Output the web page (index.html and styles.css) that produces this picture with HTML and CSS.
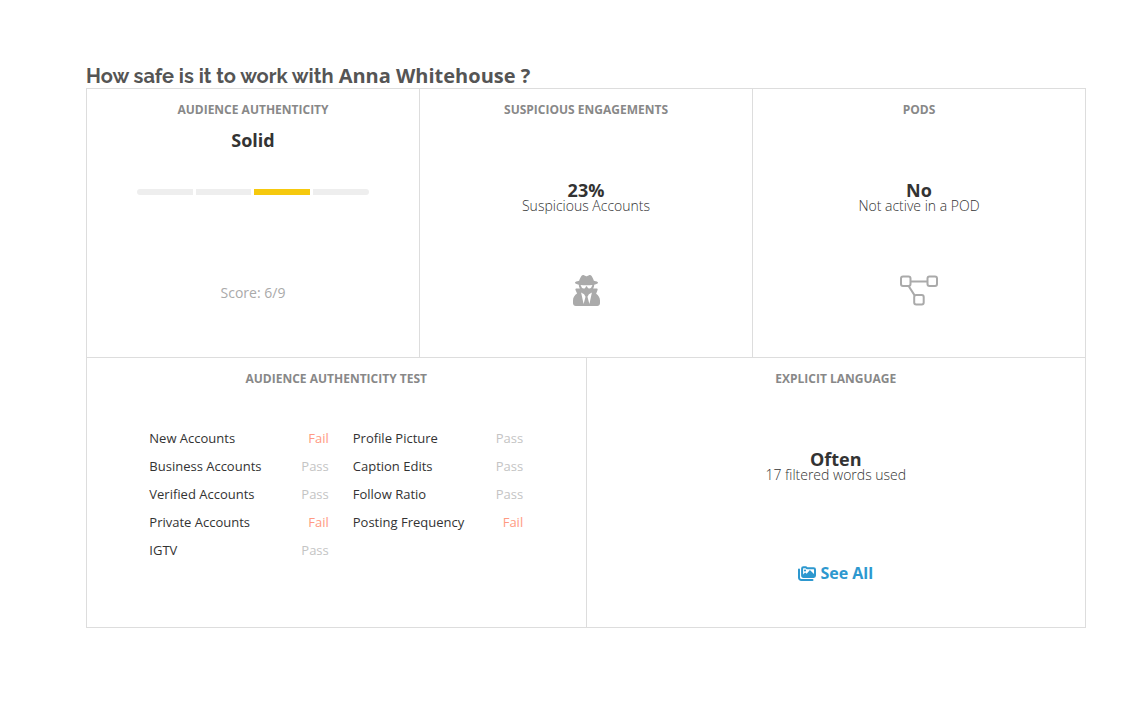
FILE: index.html
```html
<!DOCTYPE html>
<html lang="en">
<head>
<meta charset="utf-8">
<title>Account safety</title>
<link rel="stylesheet" href="styles.css">
</head>
<body>
<main class="report">
  <h1 class="title"><span class="question">How safe is it to work with</span> Anna Whitehouse ?</h1>
  <div class="panel">
    <div class="row">
      <section class="cell">
        <h2 class="label">Audience Authenticity</h2>
        <p class="value value-top">Solid</p>
        <div class="meter">
          <span class="step"></span><span class="step"></span><span class="step step-on"></span><span class="step"></span>
        </div>
        <p class="score">Score: 6/9</p>
      </section>
      <section class="cell">
        <h2 class="label">Suspicious Engagements</h2>
        <p class="value">23%</p>
        <p class="note">Suspicious Accounts</p>
        <svg class="icon" width="27" height="31" viewBox="0 0 448 512" aria-hidden="true"><path fill="currentColor" d="M383.900 308.300l23.900-62.600c4-10.500-3.700-21.700-15-21.700h-58.500c11-18.900 17.800-40.600 17.800-64v-.3c39.200-7.800 64-19.100 64-31.700 0-13.300-27.300-25.100-70.100-33-9.200-32.800-27-65.800-40.600-82.800-9.500-11.900-25.900-15.600-39.500-8.800l-27.600 13.800c-9 4.500-19.600 4.500-28.600 0L182.100 3.400c-13.600-6.800-30-3.100-39.500 8.800-13.500 17-31.400 50-40.600 82.800-42.700 7.900-70 19.700-70 33 0 12.600 24.800 23.900 64 31.700v.3c0 23.400 6.800 45.100 17.800 64H56.300c-11.500 0-19.200 11.700-14.700 22.300l25.800 60.200C27.300 329.800 0 372.700 0 422.400v44.800C0 491.900 20.100 512 44.800 512h358.400c24.700 0 44.800-20.100 44.800-44.800v-44.800c0-48.400-25.800-90.400-64.100-114.100zM176 480l-41.600-192 49.600 32 24 40-32 120zm96 0l-32-120 24-40 49.600-32L272 480zm41.700-298.500c-3.900 11.900-7 24.600-16.500 33.400-10.100 9.300-48 22.400-64-25-2.800-8.400-15.400-8.400-18.300 0-17 50.200-56 32.400-64 25-9.500-8.800-12.700-21.500-16.500-33.400-.8-2.500-6.300-5.700-6.300-5.800v-10.800c28.300 3.600 61 5.800 96 5.800s67.700-2.100 96-5.800v10.800c-.1.1-5.600 3.200-6.400 5.800z"/></svg>
      </section>
      <section class="cell">
        <h2 class="label">Pods</h2>
        <p class="value">No</p>
        <p class="note">Not active in a POD</p>
        <svg class="icon" width="38" height="31" viewBox="0 0 38 31" fill="none" stroke="currentColor" stroke-width="2" aria-hidden="true"><rect x="1" y="1.500" width="9.500" height="9.500" rx="2"/><rect x="27.500" y="1.500" width="9.500" height="9.500" rx="2"/><rect x="14.200" y="20" width="9.500" height="9.500" rx="2"/><path d="M10.500 6.500h17M8.600 11l6 9.400"/></svg>
      </section>
    </div>
    <div class="row">
      <section class="cell">
        <h2 class="label">Audience Authenticity Test</h2>
        <div class="tests">
          <table class="test-list">
            <tr><th scope="row">New Accounts</th><td class="fail">Fail</td></tr>
            <tr><th scope="row">Business Accounts</th><td>Pass</td></tr>
            <tr><th scope="row">Verified Accounts</th><td>Pass</td></tr>
            <tr><th scope="row">Private Accounts</th><td class="fail">Fail</td></tr>
            <tr><th scope="row">IGTV</th><td>Pass</td></tr>
          </table>
          <table class="test-list">
            <tr><th scope="row">Profile Picture</th><td>Pass</td></tr>
            <tr><th scope="row">Caption Edits</th><td>Pass</td></tr>
            <tr><th scope="row">Follow Ratio</th><td>Pass</td></tr>
            <tr><th scope="row">Posting Frequency</th><td class="fail">Fail</td></tr>
          </table>
        </div>
      </section>
      <section class="cell">
        <h2 class="label">Explicit Language</h2>
        <p class="value">Often</p>
        <p class="note">17 filtered words used</p>
        <a class="see-all" href="#words">
          <svg width="18" height="15" viewBox="0 0 18 15" fill="none" stroke="currentColor" stroke-width="2" aria-hidden="true"><path d="M1 3.500v8.200a2.300 2.300 0 0 0 2.300 2.300h11.200" stroke-linecap="round"/><path d="M5.400 1.200h2.400l1.300 1.100h6.600a1.300 1.300 0 0 1 1.300 1.300v6a1.300 1.300 0 0 1-1.300 1.300H5.400a1.300 1.300 0 0 1-1.300-1.300V2.500a1.300 1.300 0 0 1 1.300-1.300z"/><path d="M4.500 10.500v-1.500l2.600-2.600 1.600 1.300 3.200-3.700 4.600 4.500v2z" fill="currentColor" stroke="none"/><circle cx="7" cy="4.500" r="1.100" fill="currentColor" stroke="none"/></svg>
          <span>See All</span>
        </a>
      </section>
    </div>
  </div>
</main>
</body>
</html>
```
FILE: styles.css
```css
* { box-sizing: border-box; }

body {
  margin: 0;
  background: #fff;
  color: #333;
  font-family: "Open Sans", "Noto Sans", sans-serif;
}

h1, h2, p { margin: 0; }

.report { padding: 64px 58px 64px 86px; }

.title {
  font-size: 20px;
  line-height: 24px;
  font-weight: 700;
  color: #555;
}

.question { font-family: Raleway, Lato, sans-serif; }

.panel { border: 1px solid #ddd; }

.row { display: flex; min-height: 268px; }
.row + .row { min-height: 270px; border-top: 1px solid #ddd; }

.cell {
  flex: 1 1 0;
  display: flex;
  flex-direction: column;
  align-items: center;
  padding-top: 13px;
}
.cell + .cell { border-left: 1px solid #ddd; }

.label {
  font-size: 12px;
  line-height: 16px;
  font-weight: 700;
  text-transform: uppercase;
  color: #888;
}

.value {
  margin-top: 62px;
  font-size: 18px;
  line-height: 20px;
  font-weight: 700;
}
.value-top { margin-top: 12px; }

.note {
  font-size: 14px;
  line-height: 12px;
  font-weight: 300;
}

.meter {
  display: flex;
  gap: 3px;
  width: 70%;
  margin-top: 39px;
}
.step { flex: 1; height: 6px; background: #eee; }
.step:first-child { border-radius: 3px 0 0 3px; }
.step:last-child { border-radius: 0 3px 3px 0; }
.step-on { background: #f6c90e; }

.score {
  margin-top: 88px;
  font-size: 14px;
  line-height: 20px;
  color: #aaa;
}

.icon { margin-top: 63px; color: #aaa; }

.tests {
  display: flex;
  gap: 24px;
  width: 75%;
  margin-top: 37px;
  align-items: flex-start;
}
.test-list {
  flex: 1;
  border-collapse: collapse;
  font-size: 13px;
  line-height: 28px;
}
.test-list:first-child { flex: 0 0 48%; }
.test-list th, .test-list td { padding: 0; }
.test-list th { text-align: left; font-weight: 400; }
.test-list td { text-align: right; color: #c4c4c4; }
.test-list .fail { color: #ff9a82; }

.see-all {
  display: flex;
  align-items: center;
  gap: 4px;
  margin-top: 82px;
  font-size: 16px;
  line-height: 20px;
  font-weight: 700;
  color: #2d98cf;
  text-decoration: none;
}
```
